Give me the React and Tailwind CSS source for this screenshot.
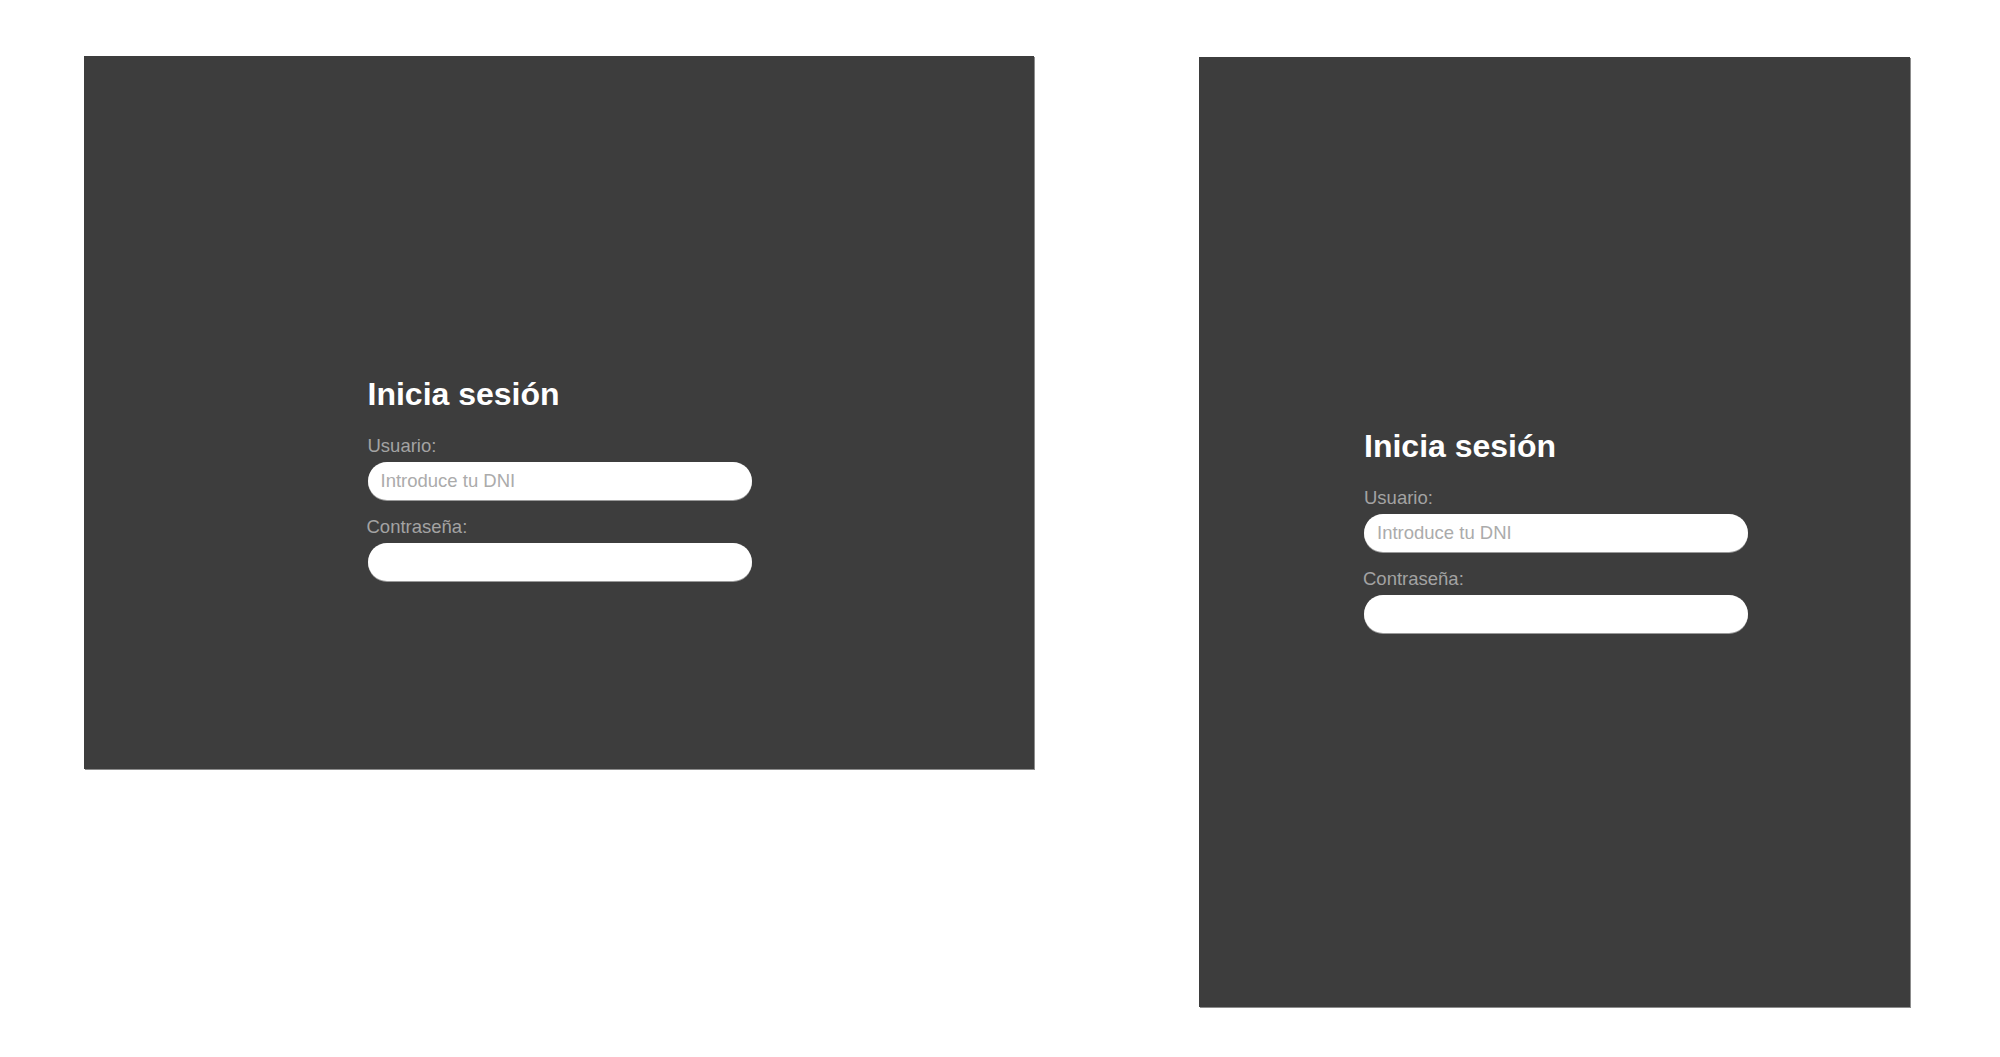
import React from "react";

function LoginForm() {
  return (
    <div className="flex w-[384px] flex-col">
      <h1 className="text-[32px] font-bold leading-[36px] text-white">Inicia sesión</h1>
      <label className="mt-[24px] text-[18.5px] leading-[20px] text-[#a3a3a3]">Usuario:</label>
      <input
        type="text"
        placeholder="Introduce tu DNI"
        className="mt-[6px] h-[38px] w-full rounded-full bg-white pl-[13px] text-[18.5px] text-[#333] outline-none shadow-[0_1px_0_#9a9a9a] placeholder:text-[#ababab]"
      />
      <label className="-ml-px mt-[17px] text-[18.5px] leading-[20px] text-[#a3a3a3]">Contraseña:</label>
      <input
        type="password"
        className="mt-[6px] h-[38px] w-full rounded-full bg-white pl-[13px] text-[18.5px] text-[#333] outline-none shadow-[0_1px_0_#9a9a9a]"
      />
    </div>
  );
}

export default function App() {
  return (
    <div
      className="flex min-h-[1057px] w-[2000px] items-start gap-[165px] bg-white pl-[84px] pt-[56px]"
      style={{ fontFamily: '"Liberation Sans", Arial, Helvetica, sans-serif' }}
    >
      <div className="flex h-[713px] w-[950px] shrink-0 justify-center bg-[#3d3d3d] pl-px pt-[320px] shadow-[1px_1px_0_#8c8c8c]">
        <LoginForm />
      </div>
      <div className="mt-px flex h-[950px] w-[711px] shrink-0 items-center justify-center bg-[#3d3d3d] pb-[3px] pl-[3px] shadow-[1px_1px_0_#8c8c8c]">
        <LoginForm />
      </div>
    </div>
  );
}
